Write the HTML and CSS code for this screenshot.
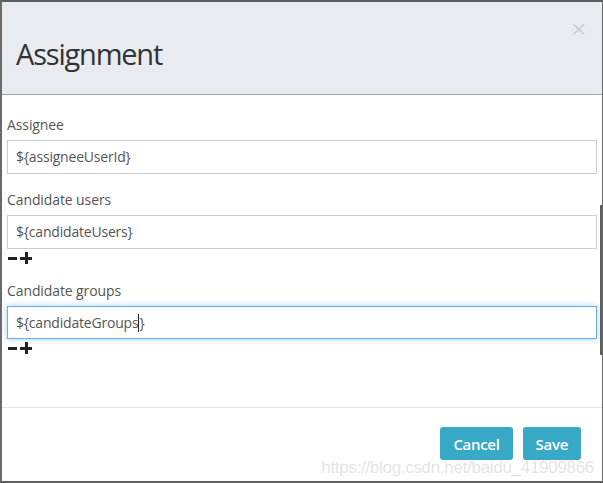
FILE: index.html
```html
<!DOCTYPE html>
<html>
<head>
<meta charset="utf-8">
<link rel="stylesheet" href="styles.css">
</head>
<body>
<div class="frame">
  <div class="modal-header">
    <h1 class="title">Assignment</h1>
    <span class="close">&times;</span>
  </div>
  <div class="modal-body">
    <div class="field">
      <label class="label">Assignee</label>
      <div class="input">${assigneeUserId}</div>
    </div>
    <div class="field">
      <label class="label">Candidate users</label>
      <div class="input">${candidateUsers}</div>
      <div class="pm"><span class="minus"></span><span class="plus"></span></div>
    </div>
    <div class="field">
      <label class="label">Candidate groups</label>
      <div class="input focus">${candidateGroups<span class="caret"></span>}</div>
      <div class="pm"><span class="minus"></span><span class="plus"></span></div>
    </div>
  </div>
  <div class="modal-footer">
    <button class="btn">Cancel</button>
    <button class="btn">Save</button>
  </div>
  <div class="scroll"></div>
  <div class="watermark">https://blog.csdn.net/baidu_41909866</div>
</div>
</body>
</html>
```
FILE: styles.css
```css
html, body {
  margin: 0;
  padding: 0;
  background: #fff;
}
.frame {
  position: relative;
  width: 603px;
  height: 483px;
  box-sizing: border-box;
  border-top: 2px solid #5d5d5d;
  border-left: 2px solid #6a6a6a;
  border-bottom: 2px solid #5d5d5d;
  border-right: 1px solid #6a6a6a;
  font-family: "Open Sans", "Noto Sans", sans-serif;
  color: #333;
  display: flex;
  flex-direction: column;
  overflow: hidden;
}
.modal-header {
  position: relative;
  height: 93px;
  background: #e8ecf0;
  border-bottom: 1px solid #9ea4aa;
  box-sizing: border-box;
  display: flex;
  align-items: flex-start;
}
.title {
  margin: 32px 0 0 14px;
  font-size: 29px;
  font-weight: 400;
  line-height: 40px;
  color: #333;
  letter-spacing: -1.2px;
}
.close {
  position: absolute;
  right: 14px;
  top: 15px;
  font-size: 22px;
  line-height: 24px;
  color: #c0c4c8;
  font-family: "DejaVu Sans", sans-serif;
  font-weight: 300;
}
.modal-body {
  padding: 20px 5px 0 5px;
  height: 313px;
  box-sizing: border-box;
  border-bottom: 1px solid #e3e3e3;
}
.field {
  display: flex;
  flex-direction: column;
}
.label {
  font-size: 14px;
  line-height: 20px;
  color: #555;
  margin-bottom: 5px;
  letter-spacing: -0.1px;
}
.input {
  height: 34px;
  box-sizing: border-box;
  border: 1px solid #ccc;
  padding: 6px 8px;
  font-size: 14px;
  line-height: 20px;
  color: #555;
  margin-bottom: 16px;
  letter-spacing: -0.2px;
}
.field + .field .input { margin-bottom: 0; }
.input.focus {
  height: 33px;
  border-color: #66afe9;
  box-shadow: 0 0 6px rgba(102, 175, 233, 0.6);
}
.caret {
  display: inline-block;
  width: 1px;
  height: 18px;
  background: #222;
  vertical-align: -4px;
}
.pm {
  display: flex;
  align-items: center;
  gap: 3px;
  height: 18px;
  padding-left: 1px;
  margin-bottom: 14px;
}
.minus {
  width: 9px;
  height: 3px;
  background: #222;
}
.plus {
  position: relative;
  width: 12px;
  height: 12px;
}
.plus::before, .plus::after {
  content: "";
  position: absolute;
  background: #222;
}
.plus::before { left: 0; top: 4.5px; width: 12px; height: 3px; }
.plus::after { left: 4.5px; top: 0; width: 3px; height: 12px; }
.modal-footer {
  display: flex;
  justify-content: flex-end;
  gap: 10px;
  padding: 19px 21px 0 0;
}
.btn {
  height: 33px;
  padding: 0 13px;
  border: none;
  border-radius: 3px;
  background: #38a9c6;
  color: #fff;
  font-family: "Open Sans", "Noto Sans", sans-serif;
  font-size: 15px;
  font-weight: 600;
  letter-spacing: -0.3px;
}
.scroll {
  position: absolute;
  right: 0;
  top: 203px;
  width: 2px;
  height: 150px;
  background: #5d5d5d;
}
.watermark {
  position: absolute;
  right: 8px;
  bottom: 3px;
  font-family: "Liberation Sans", Arial, sans-serif;
  font-size: 17px;
  color: rgba(200, 200, 200, 0.5);
  letter-spacing: -0.3px;
  pointer-events: none;
}
```
